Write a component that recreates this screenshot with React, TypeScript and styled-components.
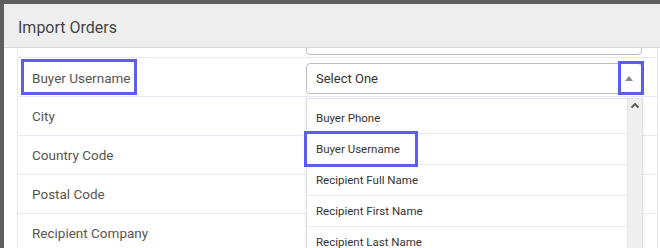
import React from 'react';
import styled, {createGlobalStyle} from "styled-components";

const Global = createGlobalStyle`
  html, body {
    margin: 0;
    padding: 0;
    background: #5e5e5e;
    overflow: hidden;
  }
  * {
    box-sizing: border-box;
  }
`

const fields = ["Buyer Username", "City", "Country Code", "Postal Code", "Recipient Company"];
const options = ["Buyer Phone", "Buyer Username", "Recipient Full Name", "Recipient First Name", "Recipient Last Name"];

export default function App() {
    return (
        <Page>
            <Global/>
            <Modal>
                <Header>
                    <Title>Import Orders</Title>
                </Header>
                <Body>
                    <Table>
                        <Row>
                            <Label></Label>
                            <Cell>
                                <Select/>
                            </Cell>
                        </Row>
                        {fields.map((f, i) => (
                            <Row key={f}>
                                <Label>{f}</Label>
                                <Cell>
                                    {i === 0 && (
                                        <Select>
                                            <span>Select One</span>
                                            <Caret/>
                                        </Select>
                                    )}
                                </Cell>
                            </Row>
                        ))}
                        <Dropdown>
                            <Options>
                                {options.map(o => <Option key={o}>{o}</Option>)}
                            </Options>
                            <Scrollbar>
                                <svg width="10" height="7" viewBox="0 0 10 7">
                                    <path d="M1.5 5.5 L5 2 L8.5 5.5" fill="none" stroke="#555" strokeWidth="1.8"/>
                                </svg>
                            </Scrollbar>
                        </Dropdown>
                        <Highlight $left={3} $top={40} $width={116} $height={36}/>
                        <Highlight $left={600} $top={42} $width={26} $height={34}/>
                        <Highlight $left={286} $top={112} $width={114} $height={36}/>
                    </Table>
                </Body>
            </Modal>
        </Page>
    );
}

const Page = styled.div`
  height: 248px;
  padding: 4px 0 0 4px;
  overflow: hidden;
`
const Modal = styled.div`
  width: 700px;
  height: 260px;
  background: #fff;
  display: flex;
  flex-direction: column;
  font-family: Roboto, "Liberation Sans", sans-serif;
`
const Header = styled.div`
  height: 44px;
  flex-shrink: 0;
  background: #eeeeee;
  border-bottom: 1px solid #d9d9d9;
  padding: 3px 14px 0;
  display: flex;
  align-items: center;
`
const Title = styled.h1`
  margin: 0;
  font-size: 16px;
  font-weight: 400;
  color: #444;
`
const Body = styled.div`
  flex: 1;
  overflow: hidden;
  padding-left: 13px;
`
const Table = styled.div`
  position: relative;
  width: 641px;
  margin-top: -29px;
  border-left: 1px solid #e6eaf0;
  border-right: 1px solid #e6eaf0;
`
const Row = styled.div`
  display: grid;
  grid-template-columns: 288px 1fr;
  height: 39px;
  border-bottom: 1px solid #e6eaf0;
`
const Label = styled.div`
  display: flex;
  align-items: center;
  padding-left: 14px;
  font-size: 13.5px;
  color: #5a5550;
`
const Cell = styled.div`
  padding: 5px 15px 3px 0;
`
const Select = styled.div`
  height: 31px;
  border: 1px solid #bdbdbd;
  border-radius: 4px;
  display: flex;
  align-items: center;
  justify-content: space-between;
  padding: 0 6px 0 9px;
  font-size: 13px;
  color: #333;
  background: #fff;
`
const Caret = styled.span`
  width: 0;
  height: 0;
  border-left: 4px solid transparent;
  border-right: 4px solid transparent;
  border-bottom: 5px solid #888;
  margin-right: 2px;
`
const Dropdown = styled.div`
  position: absolute;
  left: 288px;
  top: 79px;
  width: 337px;
  height: 200px;
  background: #fff;
  border: 1px solid #e2e2e2;
  box-shadow: 0 1px 3px rgba(0, 0, 0, 0.12);
  display: flex;
`
const Options = styled.div`
  flex: 1;
  padding-top: 4px;
`
const Option = styled.div`
  height: 31px;
  display: flex;
  align-items: center;
  padding-left: 9px;
  font-size: 11.5px;
  color: #333;
  border-bottom: 1px solid #e9e9e9;
`
const Scrollbar = styled.div`
  width: 15px;
  background: #efefef;
  border-left: 1px solid #e4e4e4;
  display: flex;
  justify-content: center;
  padding-top: 3px;
  svg {
    display: block;
  }
`
const Highlight = styled.div<{$left: number; $top: number; $width: number; $height: number}>`
  position: absolute;
  left: ${p => p.$left}px;
  top: ${p => p.$top}px;
  width: ${p => p.$width}px;
  height: ${p => p.$height}px;
  border: 3px solid #5c5cf0;
  pointer-events: none;
`
